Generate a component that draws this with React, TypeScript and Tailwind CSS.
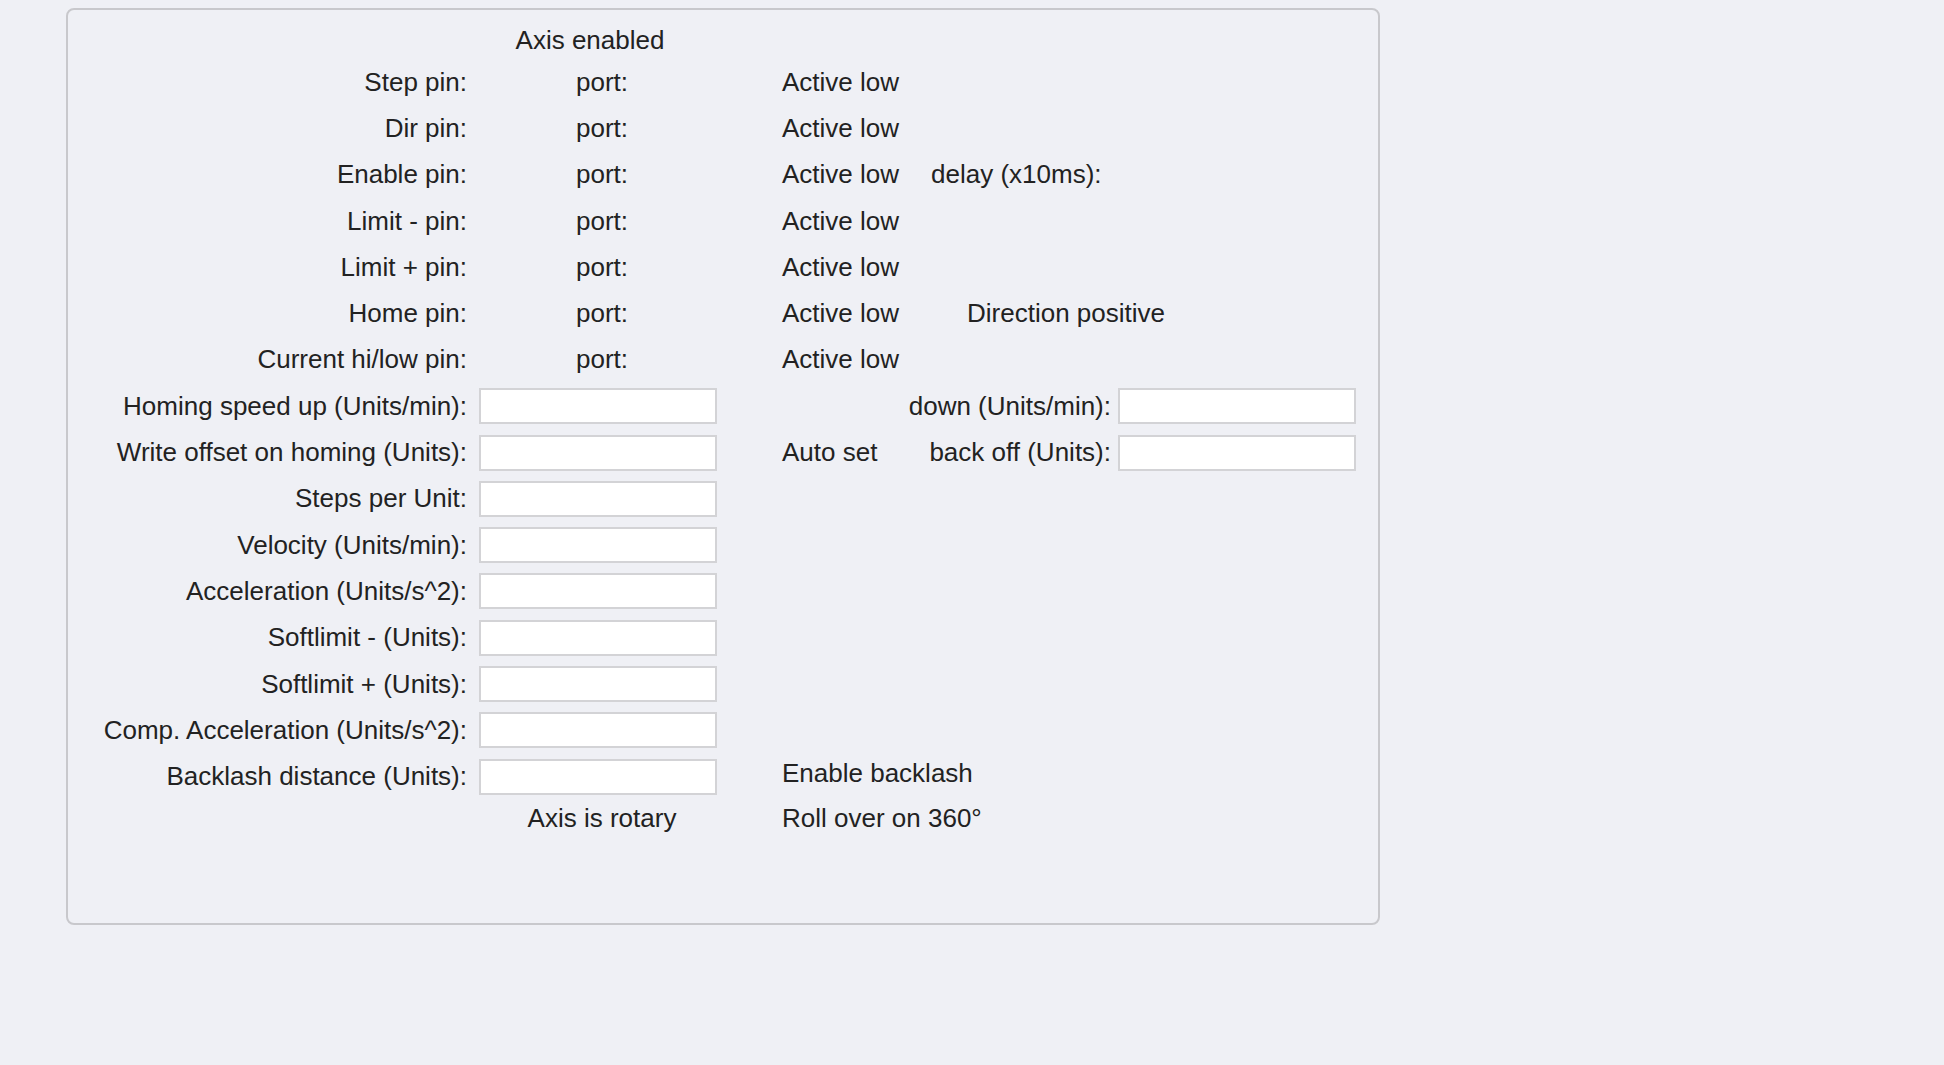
import type { ReactNode } from "react";

type PinRow = {
  label: string;
  extra?: ReactNode;
};

const PIN_ROWS: PinRow[] = [
  { label: "Step pin:" },
  { label: "Dir pin:" },
  { label: "Enable pin:", extra: <span className="ml-[32px]">delay (x10ms):</span> },
  { label: "Limit - pin:" },
  { label: "Limit + pin:" },
  { label: "Home pin:", extra: <span className="ml-[68px]">Direction positive</span> },
  { label: "Current hi/low pin:" },
];

const FIELD_ROWS = [
  "Steps per Unit:",
  "Velocity (Units/min):",
  "Acceleration (Units/s^2):",
  "Softlimit - (Units):",
  "Softlimit + (Units):",
  "Comp. Acceleration (Units/s^2):",
];

function Field() {
  return <input type="text" className="h-[36px] w-[238px] border-2 border-[#d3d3d6] bg-white outline-none" />;
}

function Row({ label, middle, right, rightLabel }: { label?: string; middle?: ReactNode; right?: ReactNode; rightLabel?: boolean }) {
  return (
    <div className="flex h-[46.3px] items-center">
      <div className="w-[399px] shrink-0 text-right">{label}</div>
      <div className="ml-[12px] flex w-[238px] shrink-0 justify-center">{middle}</div>
      <div className="ml-[65px] flex w-[329px] shrink-0 items-center">{right}</div>
      {rightLabel && (
        <div className="ml-[7px]">
          <Field />
        </div>
      )}
    </div>
  );
}

export default function App() {
  return (
    <div className="min-h-screen whitespace-nowrap bg-[#eff0f5] pt-[8px] font-['Liberation_Sans',Arial,sans-serif] text-[26px] text-[#222222]">
      <div className="ml-[66px] h-[917px] w-[1314px] rounded-[8px] border-2 border-[#c8c8cc] pt-[11px]">
        <div className="flex h-[38px] items-center">
          <div className="w-[399px] shrink-0" />
          <div className="ml-[12px] flex w-[238px] justify-center pr-[16px]">Axis enabled</div>
        </div>

        {PIN_ROWS.map((row) => (
          <Row
            key={row.label}
            label={row.label}
            middle={<span className="pl-[8px]">port:</span>}
            right={
              <>
                <span>Active low</span>
                {row.extra}
              </>
            }
          />
        ))}

        <Row
          label="Homing speed up (Units/min):"
          middle={<Field />}
          right={<span className="w-full text-right">down (Units/min):</span>}
          rightLabel
        />
        <Row
          label="Write offset on homing (Units):"
          middle={<Field />}
          right={
            <div className="flex w-full justify-between">
              <span>Auto set</span>
              <span>back off (Units):</span>
            </div>
          }
          rightLabel
        />

        {FIELD_ROWS.map((label) => (
          <Row key={label} label={label} middle={<Field />} />
        ))}

        <Row
          label="Backlash distance (Units):"
          middle={<Field />}
          right={<span className="pb-[7px]">Enable backlash</span>}
        />

        <div className="flex h-[38px] items-center">
          <div className="w-[399px] shrink-0" />
          <div className="ml-[12px] flex w-[238px] shrink-0 justify-center pl-[8px]">Axis is rotary</div>
          <div className="ml-[65px]">Roll over on 360°</div>
        </div>
      </div>
    </div>
  );
}
